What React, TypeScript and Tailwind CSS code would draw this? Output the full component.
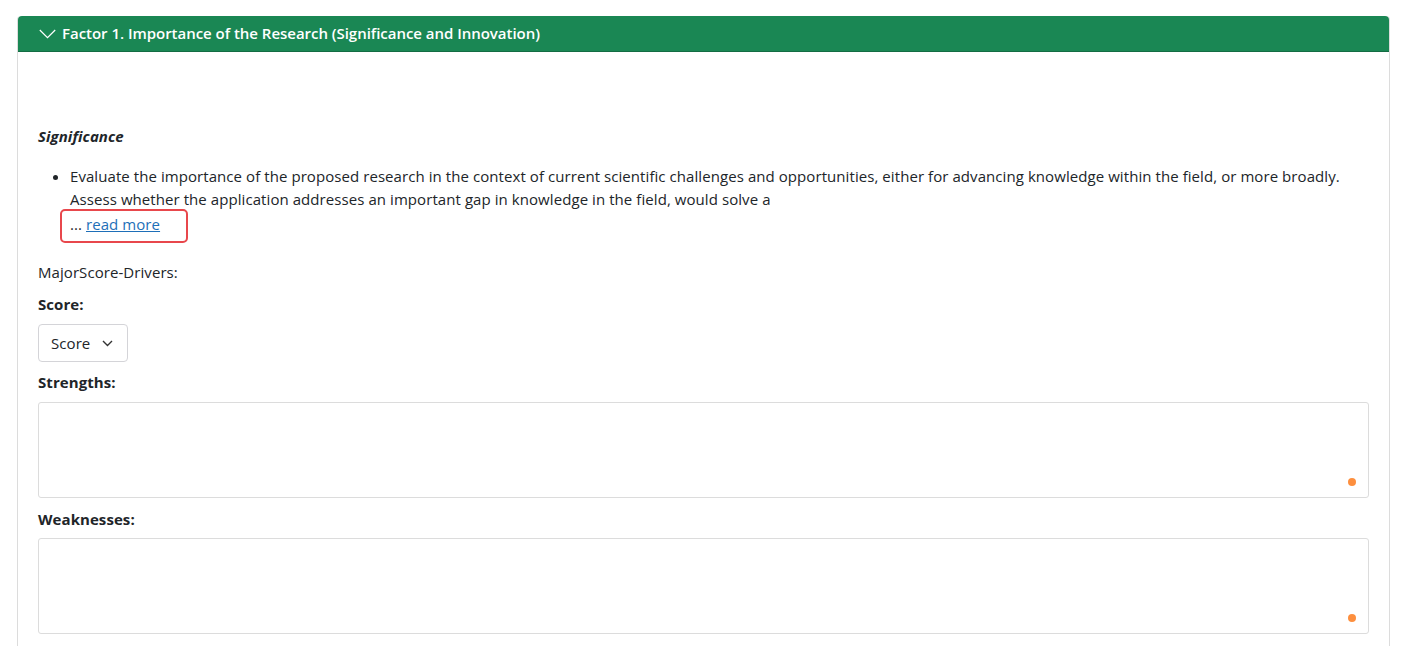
import React from "react";

export default function App() {
  return (
    <div className="min-h-[646px] bg-white pt-[16px] pl-[17px] pr-[23px] text-[#212529]" style={{ fontFamily: '"Open Sans", "Noto Sans", sans-serif' }}>
      <div className="border border-[#dcdcdc] rounded-[4px] border-t-0">
        <div className="h-[36px] bg-[#1a8754] rounded-t-[4px] border-b border-[#146c43] flex items-center pl-[21px] text-white text-[15px] font-semibold">
          <svg width="17" height="10" viewBox="0 0 17 10" className="mr-[6px]" fill="none" stroke="white" strokeWidth="1.2">
            <path d="M0.8 1l7.7 7.7L16.2 1" />
          </svg>
          <span className="tracking-[-0.03px]">Factor 1. Importance of the Research (Significance and Innovation)</span>
        </div>
        <div className="px-[20px] pt-[73px] pb-[20px] text-[15px] tracking-[0.07px]">
          <div className="font-bold italic leading-[23px]">Significance</div>
          <ul className="list-disc pl-[32px] mt-[17px] leading-[23px]">
            <li>
              Evaluate the importance of the proposed research in the context of current scientific challenges and opportunities, either for advancing knowledge within the field, or more broadly. Assess whether the application addresses an important gap in knowledge in the field, would solve a
              <div className="-mt-[2px]">
                <span className="inline-block -ml-[10px] border-2 border-[#e8474c] rounded-[5px] pl-[8px] pr-[26px] pt-[2px] pb-[6px] leading-[22px]">
                  ... <a href="#" className="text-[#1e6fb8] underline">read more</a>
                </span>
              </div>
            </li>
          </ul>
          <div className="mt-[18px] leading-[23px]">MajorScore-Drivers:</div>
          <div className="mt-[9px] font-bold leading-[23px]">Score:</div>
          <div className="mt-[8px]">
            <div className="inline-flex items-center h-[38px] w-[90px] border border-[#d4d4d8] rounded-[4px] pl-[12px] gap-[12px]">
              <span>Score</span>
              <svg width="11" height="7" viewBox="0 0 11 7" fill="none" stroke="#333" strokeWidth="1.4">
                <path d="M1 1l4.5 4.5L10 1" />
              </svg>
            </div>
          </div>
          <div className="mt-[9px] font-bold leading-[23px]">Strengths:</div>
          <div className="mt-[8px] relative h-[96px] border border-[#dcdcdc] rounded-[3px]">
            <div className="absolute right-[12px] bottom-[11px] w-[8px] h-[8px] rounded-full bg-[#fd8f3e]" />
          </div>
          <div className="mt-[10px] font-bold leading-[23px]">Weaknesses:</div>
          <div className="mt-[7px] relative h-[96px] border border-[#dcdcdc] rounded-[3px]">
            <div className="absolute right-[12px] bottom-[11px] w-[8px] h-[8px] rounded-full bg-[#fd8f3e]" />
          </div>
        </div>
      </div>
    </div>
  );
}
